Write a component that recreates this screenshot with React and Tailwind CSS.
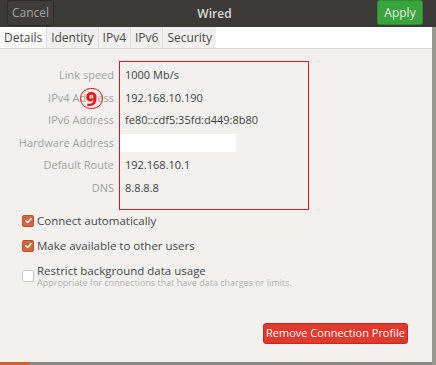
import React from "react";

const rows = [
  { label: "Link speed", value: "1000 Mb/s" },
  { label: "IPv4 Address", value: "192.168.10.190" },
  { label: "IPv6 Address", value: "fe80::cdf5:35fd:d449:8b80" },
  { label: "Hardware Address", value: null },
  { label: "Default Route", value: "192.168.10.1" },
  { label: "DNS", value: "8.8.8.8" },
];

const tabs = ["Details", "Identity", "IPv4", "IPv6", "Security"];

const Check = ({ checked }) =>
  checked ? (
    <span className="w-[12px] h-[12px] rounded-[2px] bg-[#d2663d] border border-[#b8532e] flex items-center justify-center shrink-0">
      <svg width="9" height="9" viewBox="0 0 10 10">
        <path d="M2 5.2 L4.2 7.3 L8 2.8" stroke="#fff" strokeWidth="1.6" fill="none" strokeLinecap="round" strokeLinejoin="round" />
      </svg>
    </span>
  ) : (
    <span className="w-[12px] h-[12px] rounded-[2px] bg-white border border-[#c8c6c2] shrink-0" />
  );

export default function App() {
  return (
    <div
      className="w-[436px] h-[365px] flex flex-col bg-[#f2f1f0] overflow-hidden relative"
      style={{ fontFamily: '"Open Sans", "DejaVu Sans", sans-serif' }}
    >
      {/* header bar */}
      <div className="h-[27px] bg-[#3b3a36] flex items-center justify-between pl-[7px] pr-[13px] shrink-0">
        <div className="h-[26px] w-[47px] -mt-[1px] border border-[#2c2b28] rounded-[3px] bg-[#3e3d39] flex items-center justify-center text-[12px] text-[#a9a6a0]">
          Cancel
        </div>
        <div className="text-[12px] font-semibold text-[#dcd9d2] -ml-[2px]">Wired</div>
        <div className="h-[25px] w-[46px] -mt-[2px] rounded-[3px] bg-[#3aa33f] border border-[#2f8c33] flex items-center justify-center text-[12px] text-[#e6f3e4]">
          Apply
        </div>
      </div>

      <div className="flex-1 flex flex-col border-r-[4px] border-[#9a9893]">
        {/* tabs */}
        <div className="h-[22px] flex items-stretch border-b border-[#d8d6d2] bg-white">
          <div className="flex items-stretch bg-[#f2f1f0]">
            {tabs.map((t, i) => (
              <div
                key={t}
                className={`px-[4px] flex items-center text-[12px] text-[#4a4a4a] ${
                  i === 0 ? "bg-white" : "border-l border-[#e0dedb]"
                }`}
              >
                {t}
              </div>
            ))}
          </div>
          <div className="flex-1 bg-white" />
        </div>

        {/* details grid */}
        <div className="flex mt-[12px] relative">
          <div className="w-[119px] flex flex-col items-end pr-[5px] pt-[3px] text-[11px] text-[#a4a29e]">
            {rows.map((r) => (
              <div key={r.label} className="h-[22.6px] flex items-center">
                {r.label}
              </div>
            ))}
          </div>
          <div className="w-[190px] h-[149px] border border-[#e8151b] flex flex-col pt-[2px] pl-[5px] text-[11px] text-[#3f3f3f]">
            {rows.map((r) => (
              <div key={r.label} className="h-[22.6px] flex items-center">
                {r.value === null ? (
                  <div className="-ml-[5px] w-[116px] h-[18px] bg-white" />
                ) : (
                  r.value
                )}
              </div>
            ))}
          </div>
          <div className="absolute left-[80px] top-[27px] w-[23px] h-[21px] rounded-full border border-[#f01010] flex items-center justify-center text-[20px] font-bold text-[#f01010] leading-none">
            9
          </div>
        </div>

        {/* checkboxes */}
        <div className="flex flex-col pl-[22px] -mt-[2px] text-[11.5px] text-[#4a4a4a]">
          <div className="h-[25px] flex items-center gap-[3px]">
            <Check checked />
            Connect automatically
          </div>
          <div className="h-[25px] flex items-center gap-[3px]">
            <Check checked />
            Make available to other users
          </div>
          <div className="flex items-center gap-[3px] mt-[6px]">
            <Check />
            <div className="flex flex-col">
              <span className="leading-[13px]">Restrict background data usage</span>
              <span className="text-[9px] leading-[10px] mt-[1px] text-[#b3b1ad]">
                Appropriate for connections that have data charges or limits.
              </span>
            </div>
          </div>
        </div>

        {/* remove button */}
        <div className="flex justify-end pr-[24px] mt-[35px]">
          <div className="w-[145px] h-[21px] rounded-[3px] bg-[#e2382d] border border-[#c42a21] flex items-center justify-center text-[11px] text-white">
            Remove Connection Profile
          </div>
        </div>
        <div className="flex-1" />
        <div className="h-[3px] bg-[#8a8884] flex">
          <div className="w-[30px] bg-[#c9642e]" />
        </div>
      </div>
    </div>
  );
}
